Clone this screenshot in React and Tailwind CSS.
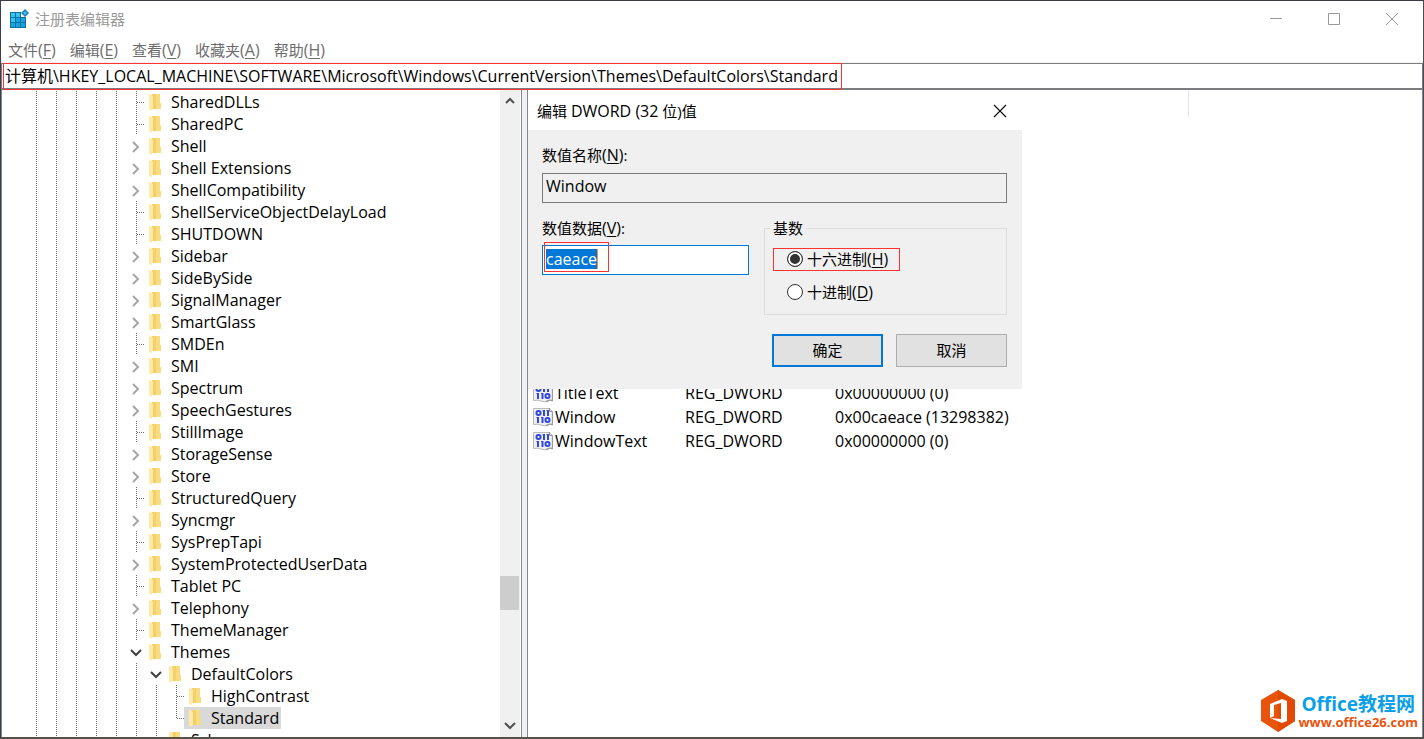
import React, { useState } from 'react'

const menus = [
  { label: '文件', hotkey: 'F' },
  { label: '编辑', hotkey: 'E' },
  { label: '查看', hotkey: 'V' },
  { label: '收藏夹', hotkey: 'A' },
  { label: '帮助', hotkey: 'H' },
]

// depth: extra indent levels, state: 'leaf' | 'closed' | 'open'
const keys = [
  { name: 'SharedDLLs', state: 'leaf' },
  { name: 'SharedPC', state: 'leaf' },
  { name: 'Shell', state: 'closed' },
  { name: 'Shell Extensions', state: 'closed' },
  { name: 'ShellCompatibility', state: 'closed' },
  { name: 'ShellServiceObjectDelayLoad', state: 'leaf' },
  { name: 'SHUTDOWN', state: 'leaf' },
  { name: 'Sidebar', state: 'closed' },
  { name: 'SideBySide', state: 'closed' },
  { name: 'SignalManager', state: 'closed' },
  { name: 'SmartGlass', state: 'closed' },
  { name: 'SMDEn', state: 'leaf' },
  { name: 'SMI', state: 'closed' },
  { name: 'Spectrum', state: 'closed' },
  { name: 'SpeechGestures', state: 'closed' },
  { name: 'StillImage', state: 'leaf' },
  { name: 'StorageSense', state: 'closed' },
  { name: 'Store', state: 'closed' },
  { name: 'StructuredQuery', state: 'leaf' },
  { name: 'Syncmgr', state: 'closed' },
  { name: 'SysPrepTapi', state: 'leaf' },
  { name: 'SystemProtectedUserData', state: 'closed' },
  { name: 'Tablet PC', state: 'leaf' },
  { name: 'Telephony', state: 'closed' },
  { name: 'ThemeManager', state: 'leaf' },
  { name: 'Themes', state: 'open' },
  { name: 'DefaultColors', state: 'open', depth: 1 },
  { name: 'HighContrast', state: 'leaf', depth: 2 },
  { name: 'Standard', state: 'leaf', depth: 2, last: true },
  { name: 'Schemes', state: 'leaf', depth: 1 },
]

const values = [
  { name: 'TitleText', type: 'REG_DWORD', data: '0x00000000 (0)' },
  { name: 'Window', type: 'REG_DWORD', data: '0x00caeace (13298382)' },
  { name: 'WindowText', type: 'REG_DWORD', data: '0x00000000 (0)' },
]

const vDots = 'w-px bg-[repeating-linear-gradient(to_bottom,#6b6b6b_0_1px,transparent_1px_2px)]'
const hDots = 'h-px bg-[repeating-linear-gradient(to_right,#6b6b6b_0_1px,transparent_1px_2px)]'

function Hotkey({ label, hotkey }) {
  return (
    <>
      {label}
      <span className="text-base leading-5">
        (<span className="underline underline-offset-2">{hotkey}</span>)
      </span>
    </>
  )
}

function RegeditIcon() {
  return (
    <svg className="h-5 w-5" viewBox="0 0 20 20" aria-hidden="true">
      <rect x="1" y="3" width="16" height="16" fill="#0b6fa8" />
      <g fill="#3cc0ee">
        <rect x="2" y="4" width="4" height="4" />
        <rect x="7" y="4" width="4" height="4" />
        <rect x="2" y="9" width="4" height="4" />
      </g>
      <g fill="#1ba3dc">
        <rect x="7" y="9" width="4" height="4" />
        <rect x="12" y="9" width="4" height="4" />
        <rect x="2" y="14" width="4" height="4" />
        <rect x="7" y="14" width="4" height="4" />
        <rect x="12" y="14" width="4" height="4" />
      </g>
      <path d="M12 3h5v5h-5z" fill="#fff" />
      <path d="M16 0l4 4-4 4-4-4z" fill="#1480b4" />
      <path d="M16 2l2 2-2 2-2-2z" fill="#45bde8" />
    </svg>
  )
}

function FolderIcon() {
  return (
    <svg className="h-[18px] w-3" viewBox="0 0 12 18" aria-hidden="true">
      <path d="M3 1h8v9h1v6H3z" fill="#f3d06a" />
      <path d="M7 1h4v9h1v6H7z" fill="#fadc7e" />
      <path d="M0 1h1l3 2v13l-2 2-2-2z" fill="#ffe9a6" />
    </svg>
  )
}

function DwordIcon() {
  return (
    <svg className="h-5 w-5" viewBox="0 0 20 20" aria-hidden="true">
      <path d="M.5 1.500h16l3 3v13.500q-3-1.500-5.500 0t-6 0-7.500-.5z" fill="#f1f1f4" stroke="#b9b9bd" />
      <path d="M16.500 1v3.500h3" fill="none" stroke="#8f8f94" />
      <path d="M13 19q3-2.500 6.500-1.500V5" fill="none" stroke="#9a9a9f" strokeWidth="1.200" />
      <g fill="none" stroke="#3049dc" strokeWidth="2">
        <rect x="3.500" y="4" width="4" height="4" rx="1.700" />
        <path d="M11 3v6M15 3v6M5 10v6M9.500 10v6" />
        <path d="M9.500 3.500H11M13.500 3.500H15M3.500 10.500H5M8 10.500h1.500" strokeWidth="1" />
        <rect x="12.500" y="11" width="4" height="4" rx="1.700" />
      </g>
    </svg>
  )
}

function Chevron({ dir, className }) {
  const paths = {
    right: 'M3 2l5 5-5 5',
    down: 'M1 4l5 5 5-5',
    up: 'M2 8l4-4 4 4',
  }
  return (
    <svg className={`h-[13px] w-3 ${className}`} viewBox="0 0 12 13" aria-hidden="true">
      <path d={paths[dir]} fill="none" stroke="currentColor" strokeWidth="2" />
    </svg>
  )
}

function TreeRow({ item, selected, onSelect }) {
  const depth = item.depth || 0
  const guides = Array.from({ length: 5 + depth })
  return (
    <li className="flex h-[22px] shrink-0">
      {guides.map((_, i) => (
        <span key={i} className="flex w-5 shrink-0 pl-[10px]">
          <span className={vDots} />
        </span>
      ))}
      {item.state === 'leaf' ? (
        <span className="flex w-[18px] shrink-0 pl-[10px]">
          <span className={item.last ? `${vDots} h-3` : vDots} />
          <span className={`${hDots} mt-[11px] w-[7px]`} />
        </span>
      ) : (
        <span className="flex w-[18px] shrink-0 items-center pl-1">
          <Chevron
            dir={item.state === 'open' ? 'down' : 'right'}
            className={item.state === 'open' ? 'text-[#404040]' : 'text-[#a6a6a6]'}
          />
        </span>
      )}
      <button
        type="button"
        onClick={onSelect}
        className={`flex items-center pr-[2px] pl-[5px] whitespace-nowrap ${selected ? 'bg-[#d9d9d9]' : ''}`}
      >
        <FolderIcon />
        <span className="pl-[10px] text-base leading-5">{item.name}</span>
      </button>
    </li>
  )
}

function Radio({ label, hotkey, value, base, setBase }) {
  return (
    <label className="flex items-center gap-1">
      <input
        type="radio"
        name="base"
        checked={base === value}
        onChange={() => setBase(value)}
        className="h-4 w-4 appearance-none rounded-full border border-[#333] bg-white checked:bg-[#333] checked:shadow-[inset_0_0_0_2px_#fff]"
      />
      <span>
        <Hotkey label={label} hotkey={hotkey} />
      </span>
    </label>
  )
}

function EditDialog() {
  const [data, setData] = useState('caeace')
  const [base, setBase] = useState('hex')

  return (
    <div role="dialog" aria-labelledby="dialog-title" className="absolute top-[3px] left-0 w-[494px] bg-[#f0f0f0]">
      <div className="flex h-[37px] items-center justify-between bg-white pr-[14px] pb-[2px] pl-[9px]">
        <h2 id="dialog-title">
          编辑 <span className="text-base leading-5">DWORD (32</span> 位)值
        </h2>
        <button type="button" aria-label="关闭">
          <svg className="h-4 w-4" viewBox="0 0 16 16" aria-hidden="true">
            <path d="M2 2l12 12M14 2L2 14" stroke="#111" strokeWidth="1.200" />
          </svg>
        </button>
      </div>

      <div className="pt-[15px] pr-[15px] pb-[22px] pl-[14px]">
        <label htmlFor="value-name" className="block leading-5">
          <Hotkey label="数值名称" hotkey="N" />:
        </label>
        <input
          id="value-name"
          readOnly
          value="Window"
          className="mt-2 block h-[30px] w-full border border-[#7a7a7a] px-[3px] pb-1 text-base"
        />

        <div className="mt-[15px] flex gap-[15px]">
          <div className="w-[207px]">
            <label htmlFor="value-data" className="block leading-5">
              <Hotkey label="数值数据" hotkey="V" />:
            </label>
            <div className="relative mt-[7px] flex h-[30px] items-center border border-[#0078d7] bg-white pb-[2px] pl-[3px]">
              <input
                id="value-data"
                value={data}
                onChange={(e) => setData(e.target.value)}
                className="field-sizing-content h-5 border-r border-[#ff8728] bg-[#0078d7] text-base text-white outline-none"
              />
              <span className="pointer-events-none absolute -top-1 left-px h-[30px] w-[65px] border border-[#ff3232]" />
            </div>
          </div>

          <fieldset className="relative mt-[10px] h-[87px] flex-1 border border-[#dcdcdc] pt-[19px] pl-2">
            <legend className="absolute -top-[11px] left-[5px] bg-[#f0f0f0] px-[3px] leading-5">基数</legend>
            <div className="flex h-[23px] w-[127px] items-center border border-[#ff3232] pb-[2px] pl-[13px]">
              <Radio label="十六进制" hotkey="H" value="hex" base={base} setBase={setBase} />
            </div>
            <div className="mt-[10px] flex h-[23px] items-center pb-[2px] pl-[14px]">
              <Radio label="十进制" hotkey="D" value="dec" base={base} setBase={setBase} />
            </div>
          </fieldset>
        </div>

        <div className="mt-[19px] flex justify-end gap-[13px]">
          <button type="button" className="h-[33px] w-[111px] border-2 border-[#0078d7] bg-[#e1e1e1] pb-[2px]">
            确定
          </button>
          <button type="button" className="h-[33px] w-[111px] border border-[#adadad] bg-[#e1e1e1] pb-[2px]">
            取消
          </button>
        </div>
      </div>
    </div>
  )
}

function Watermark() {
  return (
    <a href="#office" className="absolute right-1 bottom-1 flex items-center gap-px">
      <svg className="h-[44px] w-[38px]" viewBox="0 0 38 44" aria-hidden="true">
        <path d="M19 1l17 10v21L19 43 2 32V11z" fill="#e9540d" />
        <path d="M19 1l17 10v21L19 43z" fill="#e14a06" />
        <path d="M11 15l12-5 5 2v20l-5 2-12-5 11 1V14l-7 2v11l-4 2z" fill="#fff" />
      </svg>
      <span className="flex flex-col pt-px font-bold">
        <span className="pl-[3px] text-[19px] leading-5 text-[#0c9fe8]">Office教程网</span>
        <span className="text-[13px] leading-4 text-[#e9540d]">www.office26.com</span>
      </span>
    </a>
  )
}

export default function App() {
  const [selected, setSelected] = useState('Standard')

  return (
    <div className="flex h-screen flex-col overflow-hidden border-t border-r border-b-2 border-l border-t-[#3a3a44] border-r-[#4a4a50] border-b-[#55524a] border-l-[#3c3f4c] bg-white font-['Open_Sans','Noto_Sans_CJK_SC',sans-serif] text-[15px] leading-5 text-black">
      <header className="flex h-[37px] shrink-0 items-center pb-px text-[#999]">
        <div className="flex flex-1 items-center gap-[6px] pl-2">
          <RegeditIcon />
          <h1>注册表编辑器</h1>
        </div>
        <div className="flex gap-[42px] pr-[23px]">
          <button type="button" aria-label="最小化">
            <svg className="h-4 w-4" viewBox="0 0 16 16" aria-hidden="true">
              <path d="M2 7.500h12" stroke="currentColor" />
            </svg>
          </button>
          <button type="button" aria-label="最大化">
            <svg className="h-4 w-4" viewBox="0 0 16 16" aria-hidden="true">
              <path d="M2.500 2.500h11v11h-11z" fill="none" stroke="currentColor" />
            </svg>
          </button>
          <button type="button" aria-label="关闭">
            <svg className="h-4 w-4" viewBox="0 0 16 16" aria-hidden="true">
              <path d="M2 2l12 12M14 2L2 14" stroke="currentColor" />
            </svg>
          </button>
        </div>
      </header>

      <nav className="flex h-[25px] shrink-0 items-center gap-[14px] border-b border-[#f0f0f0] pl-[7px] text-[#6d6d6d]">
        {menus.map((m) => (
          <button key={m.hotkey} type="button" className="whitespace-nowrap">
            <Hotkey label={m.label} hotkey={m.hotkey} />
          </button>
        ))}
      </nav>

      {/* Address bar */}
      <div className="flex h-[27px] shrink-0 border border-b-2 border-[#7b7b80]">
        <div className="z-10 -mt-px -mb-[2px] ml-px flex w-[839px] border border-[#ff3232] pb-px">
          <input
            aria-label="地址"
            readOnly
            value="计算机\HKEY_LOCAL_MACHINE\SOFTWARE\Microsoft\Windows\CurrentVersion\Themes\DefaultColors\Standard"
            className="min-w-0 flex-1 pl-px text-base leading-5 outline-none"
          />
        </div>
      </div>

      <div className="flex min-h-0 flex-1 bg-[#f0f0f0]">
        {/* Key tree */}
        <div className="flex w-[521px] shrink-0 border-r border-l border-[#828790] bg-white">
          <ul className="flex min-w-0 flex-1 flex-col overflow-hidden pt-px pl-6">
            {keys.map((item) => (
              <TreeRow
                key={item.name}
                item={item}
                selected={selected === item.name}
                onSelect={() => setSelected(item.name)}
              />
            ))}
          </ul>
          <div className="mr-px flex w-5 flex-col items-center bg-[#f0f0f0] py-[5px] text-[#505050]">
            <Chevron dir="up" className="shrink-0" />
            <div className="flex w-full flex-1 flex-col">
              <div className="grow-[468]" />
              <div className="mr-px h-[34px] bg-[#cdcdcd]" />
              <div className="grow-[109]" />
            </div>
            <Chevron dir="down" className="shrink-0" />
          </div>
        </div>

        {/* Value list */}
        <main className="relative ml-[5px] min-w-0 flex-1 border-r border-l border-[#828790] bg-white">
          <div className="h-[27px] w-[661px] border-r border-[#e5e5e5]" />
          <table className="mt-[264px] ml-[5px] table-fixed text-left text-base leading-5">
            <tbody>
              {values.map((v) => (
                <tr key={v.name} className="h-6 whitespace-nowrap">
                  <td className="w-[152px] p-0">
                    <span className="flex items-center gap-[2px]">
                      <DwordIcon />
                      {v.name}
                    </span>
                  </td>
                  <td className="w-[150px] p-0">{v.type}</td>
                  <td className="p-0">{v.data}</td>
                </tr>
              ))}
            </tbody>
          </table>
          <EditDialog />
          <Watermark />
        </main>
      </div>
    </div>
  )
}
